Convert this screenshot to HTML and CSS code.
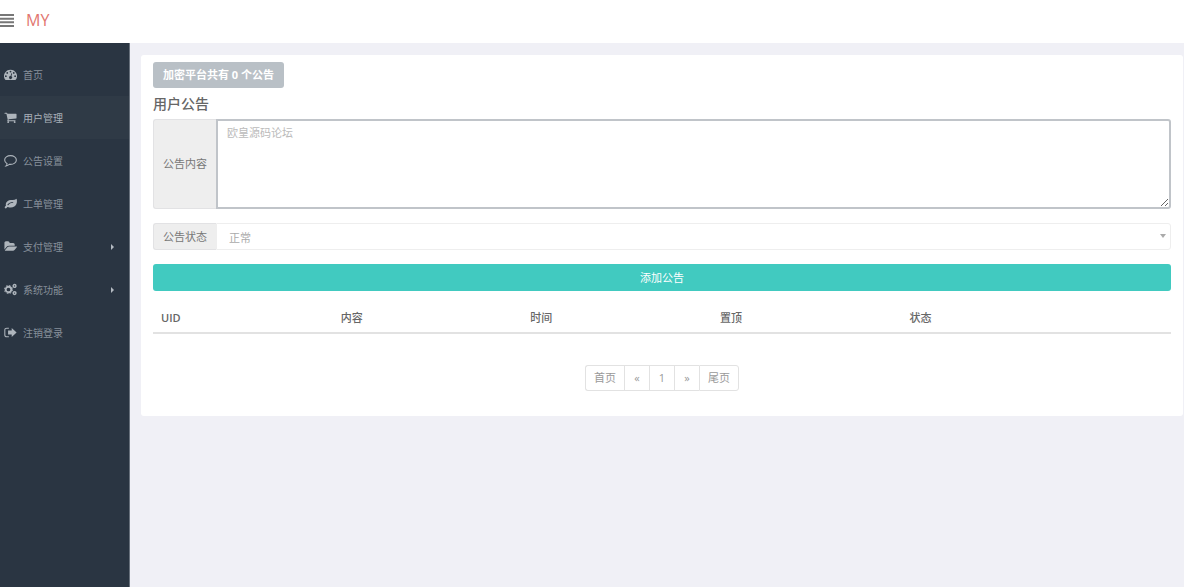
FILE: index.html
```html
<!DOCTYPE html>
<html lang="zh-CN">
<head>
    <meta charset="UTF-8">
    <meta name="viewport" content="width=device-width, initial-scale=1.0">
    <title>用户公告</title>
    <link rel="stylesheet" href="styles.css">
</head>
<body>
    <header class="header">
        <button type="button" class="menu-toggle" aria-label="菜单">
            <svg viewBox="0 0 14 13"><path d="M0 0h14v2H0zM0 3.700h14v2H0zM0 7.300h14v2H0zM0 11h14v2H0z"/></svg>
        </button>
        <a href="#" class="logo">MY</a>
    </header>

    <div class="wrapper">
        <!-- Sidebar -->
        <nav class="sidebar">
            <a href="#">
                <svg viewBox="0 0 16 16"><path fill-rule="evenodd" d="M8 2a8 8 0 0 0-6.700 12.300q.3.500.9.500h11.600q.6 0 .9-.5A8 8 0 0 0 8 2zM2.300 9a1.100 1.100 0 1 1 0 2.200 1.100 1.100 0 0 1 0-2.200zM4 5a1.100 1.100 0 1 1 0 2.200A1.100 1.100 0 0 1 4 5zM8 3.300a1.100 1.100 0 1 1 0 2.200 1.100 1.100 0 0 1 0-2.200zM12 5a1.100 1.100 0 1 1 0 2.200A1.100 1.100 0 0 1 12 5zM13.700 9a1.100 1.100 0 1 1 0 2.200 1.100 1.100 0 0 1 0-2.200zM9 6.500l1 .3-.9 3.400a1.800 1.800 0 1 1-1-.3z"/></svg>
                <span>首页</span>
            </a>
            <a href="#" class="active">
                <svg viewBox="0 0 1792 1792"><path d="M704 1536q0 52-38 90t-90 38-90-38-38-90 38-90 90-38 90 38 38 90zm896 0q0 52-38 90t-90 38-90-38-38-90 38-90 90-38 90 38 38 90zm128-1088v512q0 24-16 42t-41 22l-1044 122q13 60 13 70 0 16-24 64h920q26 0 45 19t19 45-19 45-45 19h-1024q-26 0-45-19t-19-45q0-11 8-31t16-36 21-40 16-30l-177-823h-204q-26 0-45-19t-19-45 19-45 45-19h256q16 0 28 6t20 16 13 24 8 26 5 30 5 26h1201q26 0 45 19t19 45z"/></svg>
                <span>用户管理</span>
            </a>
            <a href="#">
                <svg viewBox="0 0 16 16"><path fill="none" stroke="currentColor" stroke-width="1.300" d="M8 2c4 0 7.200 2.400 7.200 5.400s-3.200 5.400-7.200 5.400q-.8 0-1.500-.1-1.600 1.500-4 1.900 1.200-1.200 1.300-2.700C2 10.900.8 9.300.8 7.400.8 4.400 4 2 8 2z"/></svg>
                <span>公告设置</span>
            </a>
            <a href="#">
                <svg viewBox="0 0 16 16"><path fill-rule="evenodd" d="M15.500 2c1 3.500.4 7.500-2.800 9.700-2.600 1.700-5.500 1.500-8 .5-.8-.3-1.700 1.600-2.500 1.800-.7.100-1.400-1-1.300-1.600.2-.8 1.700-1.300 1.400-2.200C1.700 7.500 3.500 4.900 6.300 4c2.500-.8 6.500.2 9.200-2zM11 6C8 6 6 7.300 4.300 9.200c-.5.700.4 1.400 1 .8C7 8.200 8.500 7.200 11 7.200c.8 0 .8-1.200 0-1.200z"/></svg>
                <span>工单管理</span>
            </a>
            <a href="#">
                <svg viewBox="0 0 1944 1792"><path d="M1943 952q0 31-31 66l-336 396q-43 51-120 86t-144 36h-1088q-34 0-60-13t-27-43q0-31 31-66l336-396q43-51 120-86t144-36h1088q34 0 60 13t27 43zm-343-344v160h-832q-94 0-197 47t-164 120l-337 396-5 6v-985q0-92 66-158t158-66h320q92 0 158 66t66 158v32h544q92 0 158 66t66 158z"/></svg>
                <span>支付管理</span>
                <i class="arrow"></i>
            </a>
            <a href="#">
                <svg viewBox="0 0 16 16"><g fill="none" stroke="currentColor"><circle cx="5.500" cy="8" r="3.400" stroke-width="2.200"/><circle cx="5.500" cy="8" r="5" stroke-width="1.200" stroke-dasharray="2 1.930"/><circle cx="13" cy="3.600" r="1.700" stroke-width="1.800"/><circle cx="13" cy="12.400" r="1.700" stroke-width="1.800"/></g></svg>
                <span>系统功能</span>
                <i class="arrow"></i>
            </a>
            <a href="#">
                <svg viewBox="0 0 16 16"><path fill="none" stroke="currentColor" stroke-width="1.300" d="M6 2.700H3.500Q1 2.700 1 5v6q0 2.300 2.500 2.300H6"/><path d="M9.500 2.500l6 5.500-6 5.500V10.500H5v-5h4.500z"/></svg>
                <span>注销登录</span>
            </a>
        </nav>

        <!-- Main content -->
        <main class="content">
            <section class="panel">
                <button type="button" class="btn-count">加密平台共有 0 个公告</button>
                <h1>用户公告</h1>

                <form>
                    <div class="input-group">
                        <label for="notice">公告内容</label>
                        <textarea id="notice" placeholder="欧皇源码论坛"></textarea>
                    </div>
                    <div class="input-group">
                        <label for="status">公告状态</label>
                        <div class="select-box">
                            <select id="status">
                                <option>正常</option>
                            </select>
                        </div>
                    </div>
                    <button type="button" class="btn-add">添加公告</button>
                </form>

                <table>
                    <thead>
                        <tr>
                            <th class="uid">UID</th>
                            <th>内容</th>
                            <th>时间</th>
                            <th>置顶</th>
                            <th class="last">状态</th>
                        </tr>
                    </thead>
                </table>

                <ul class="pagination">
                    <li><a href="#">首页</a></li>
                    <li><a href="#">«</a></li>
                    <li><a href="#">1</a></li>
                    <li><a href="#">»</a></li>
                    <li><a href="#">尾页</a></li>
                </ul>
            </section>
        </main>
    </div>
</body>
</html>
```

FILE: styles.css
```css
* {
    box-sizing: border-box;
}

body {
    display: flex;
    flex-direction: column;
    min-height: 100vh;
    margin: 0;
    background-color: #f0f0f6;
    color: #777;
    font-family: "Open Sans", "Noto Sans CJK SC", sans-serif;
    font-size: 11px;
    line-height: 16px;
}

a {
    color: inherit;
    text-decoration: none;
}

button, select, textarea {
    font: inherit;
}

/* Header */
.header {
    display: flex;
    align-items: center;
    gap: 12px;
    height: 43px;
    padding-bottom: 3px;
    background-color: #fff;
}

.menu-toggle {
    display: flex;
    padding: 0;
    border: 0;
    background: none;
    color: #777;
}

.menu-toggle svg {
    width: 14px;
    height: 13px;
    fill: currentColor;
}

.logo {
    color: #e2766f;
    font-size: 16px;
}

.wrapper {
    display: flex;
    flex: 1;
}

/* Sidebar */
.sidebar {
    width: 130px;
    padding-top: 10px;
    background-color: #2a3542;
    border-right: 1px solid #68717c;
    color: #87909a;
    font-size: 10px;
}

.sidebar a {
    display: flex;
    align-items: center;
    gap: 6px;
    height: 43px;
    padding: 0 15px 0 4px;
}

.sidebar a.active {
    background-color: #2f3a46;
    color: #a9b0b8;
}

.sidebar svg {
    width: 13px;
    height: 13px;
    fill: currentColor;
    color: #aeb5bc;
}

.arrow {
    margin-left: auto;
    border: 3px solid transparent;
    border-left-color: #b3bac1;
    border-right: 0;
}

/* Content */
.content {
    flex: 1;
    padding: 12px 1px 12px 11px;
}

.panel {
    padding: 7px 12px 25px;
    border-radius: 3px;
    background-color: #fff;
}

.btn-count {
    display: block;
    height: 26px;
    padding: 0 10px;
    border: 0;
    border-radius: 3px;
    background-color: #b9c0c6;
    color: #fff;
    font-weight: bold;
}

h1 {
    margin: 6px 0 5px;
    color: #666;
    font-size: 14px;
    font-weight: 500;
    line-height: 20px;
}

.input-group {
    display: flex;
    margin-bottom: 14px;
}

.input-group label {
    display: flex;
    align-items: center;
    padding: 0 9px;
    border: 1px solid #e2e2e4;
    border-right: 0;
    border-radius: 3px 0 0 3px;
    background-color: #eee;
}

.input-group textarea {
    flex: 1;
    height: 90px;
    padding: 4px 9px;
    border: 2px solid #c0c4c9;
    border-radius: 0 3px 3px 0;
    outline: 0;
}

textarea::placeholder {
    color: #bbb;
}

.select-box {
    position: relative;
    flex: 1;
}

.select-box::after {
    content: "";
    position: absolute;
    top: 11px;
    right: 5px;
    border: 3px solid transparent;
    border-top: 4px solid #aaa;
    border-bottom: 0;
}

select {
    display: block;
    width: 100%;
    height: 27px;
    padding: 3px 12px 0;
    border: 1px solid #eee;
    border-radius: 0 3px 3px 0;
    background-color: #fff;
    color: #aaa;
    appearance: none;
}

.btn-add {
    display: block;
    width: 100%;
    height: 27px;
    border: 0;
    border-radius: 3px;
    background-color: #41cac0;
    color: #fff;
}

table {
    width: 100%;
    margin-top: 14px;
    border-collapse: collapse;
    table-layout: fixed;
}

th {
    width: 19%;
    padding: 5px 8px 6px;
    border-bottom: 2px solid #e2e2e2;
    color: #666;
    font-weight: 500;
    text-align: left;
}

th.uid {
    width: 18%;
    font-weight: 600;
}

th.last {
    width: 27%;
}

/* Pagination */
.pagination {
    display: flex;
    justify-content: center;
    margin: 31px 0 0;
    padding: 0;
    list-style: none;
}

.pagination a {
    display: block;
    min-width: 25px;
    padding: 4px 8px;
    border: 1px solid #e2e2e2;
    border-right: 0;
    color: #999;
    text-align: center;
}

.pagination li:first-child a {
    border-radius: 3px 0 0 3px;
}

.pagination li:last-child a {
    border-right: 1px solid #e2e2e2;
    border-radius: 0 3px 3px 0;
}
```
